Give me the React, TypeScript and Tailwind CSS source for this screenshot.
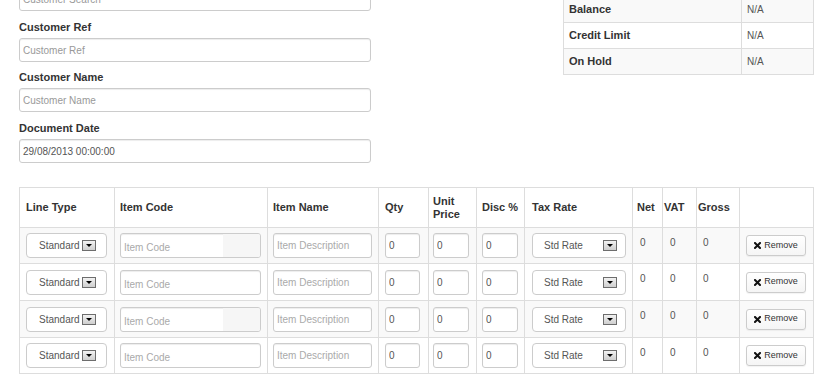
import React from "react";

const inputBase =
  "block h-[24px] w-full rounded-[3px] border border-[#ccc] bg-white pl-[3px] text-[10px] text-[#555] shadow-[inset_0_1px_1px_rgba(0,0,0,0.075)] outline-none placeholder:text-[#999]";

function FormGroup({
  label,
  placeholder,
  value,
  mb,
}: {
  label?: string;
  placeholder: string;
  value?: string;
  mb: string;
}) {
  return (
    <div className={mb}>
      {label && (
        <div className="mb-[3px] h-[15px] text-[11px] font-bold leading-[15px] text-[#333]">{label}</div>
      )}
      <input readOnly className={inputBase} placeholder={placeholder} defaultValue={value} />
    </div>
  );
}

function DropArrow() {
  return (
    <span className="flex h-[11px] w-[14px] items-center justify-center border border-[#6d6d6d] bg-gradient-to-b from-[#f2f2f2] to-[#cfcfcf]">
      <span className="block h-0 w-0 border-l-[3px] border-r-[3px] border-t-[3px] border-l-transparent border-r-transparent border-t-black" />
    </span>
  );
}

const cellInput =
  "h-[25px] rounded-[3px] border border-[#ccc] bg-white pl-[3px] text-[10px] text-[#555] shadow-[inset_0_1px_1px_rgba(0,0,0,0.075)] outline-none placeholder:text-[#aaa]";

function BodyRow({ h, striped, shaded }: { h: string; striped: boolean; shaded: boolean }) {
  const bg = striped ? "bg-[#f9f9f9]" : "bg-white";
  return (
    <div className={`flex border-b border-[#ddd] ${h} ${bg}`}>
      <div className="flex w-[95px] items-center border-r border-[#ddd] pl-[6px]">
        <div className="flex h-[25px] w-[81px] items-center rounded-[4px] border border-[#ccc] bg-white pl-[12px] text-[10px] text-[#555]">
          <span>Standard</span>
          <span className="ml-[2px]">
            <DropArrow />
          </span>
        </div>
      </div>
      <div className="flex w-[153px] items-center border-r border-[#ddd] pl-[5px]">
        <div className="relative h-[25px] w-[141px] overflow-hidden rounded-[3px] border border-[#ccc] bg-white shadow-[inset_0_1px_1px_rgba(0,0,0,0.075)]">
          {shaded && <div className="absolute right-0 top-0 h-full w-[37px] bg-[#f6f6f6]" />}
          <input
            readOnly
            className="relative h-full w-full bg-transparent pl-[3px] text-[10px] text-[#555] outline-none placeholder:text-[#aaa]"
            placeholder="Item Code"
          />
        </div>
      </div>
      <div className="flex w-[111px] items-center border-r border-[#ddd] pl-[5px]">
        <input readOnly className={`${cellInput} w-[99px]`} placeholder="Item Description" />
      </div>
      <div className="flex w-[50px] items-center border-r border-[#ddd] pl-[6px]">
        <input readOnly className={`${cellInput} w-[35px]`} defaultValue="0" />
      </div>
      <div className="flex w-[48px] items-center border-r border-[#ddd] pl-[4px]">
        <input readOnly className={`${cellInput} w-[36px]`} defaultValue="0" />
      </div>
      <div className="flex w-[48px] items-center border-r border-[#ddd] pl-[5px]">
        <input readOnly className={`${cellInput} w-[36px]`} defaultValue="0" />
      </div>
      <div className="flex w-[108px] items-center border-r border-[#ddd] pl-[7px]">
        <div className="flex h-[25px] w-[94px] items-center justify-between rounded-[4px] border border-[#ccc] bg-white pl-[11px] pr-[8px] text-[10px] text-[#555]">
          <span>Std Rate</span>
          <DropArrow />
        </div>
      </div>
      <div className="w-[30px] border-r border-[#ddd] pl-[7px] pt-[8px] text-[10px] leading-[14px] text-[#555]">0</div>
      <div className="w-[34px] border-r border-[#ddd] pl-[7px] pt-[8px] text-[10px] leading-[14px] text-[#555]">0</div>
      <div className="w-[43px] border-r border-[#ddd] pl-[6px] pt-[8px] text-[10px] leading-[14px] text-[#555]">0</div>
      <div className="flex w-[74px] items-center border-r border-[#ddd] pl-[6px]">
        <button className="flex h-[21px] w-[60px] items-center justify-center gap-[3px] rounded-[3px] border border-[#ccc] bg-gradient-to-b from-white to-[#f5f5f5] text-[9px] text-[#333] shadow-[0_1px_1px_rgba(0,0,0,0.05)]">
          <svg width="7" height="7" viewBox="0 0 7 7">
            <path d="M1 1L6 6M6 1L1 6" stroke="#111" strokeWidth="2" strokeLinecap="square" />
          </svg>
          <span>Remove</span>
        </button>
      </div>
    </div>
  );
}

export default function App() {
  const rows: { h: string; striped: boolean; shaded: boolean }[] = [
    { h: "h-[36px]", striped: true, shaded: true },
    { h: "h-[37px]", striped: false, shaded: false },
    { h: "h-[37px]", striped: true, shaded: true },
    { h: "h-[36px]", striped: false, shaded: false },
  ];
  return (
    <div className="h-[375px] w-[830px] overflow-hidden bg-white font-['Liberation_Sans',Arial,sans-serif]">
      <div className="-mt-[13px] ml-[19px] w-[795px]">
        <div className="flex items-start justify-between">
          <div className="w-[352px]">
            <FormGroup placeholder="Customer Search" mb="mb-[9px]" />
            <FormGroup label="Customer Ref" placeholder="Customer Ref" mb="mb-[8px]" />
            <FormGroup label="Customer Name" placeholder="Customer Name" mb="mb-[9px]" />
            <FormGroup label="Document Date" placeholder="" value="29/08/2013 00:00:00" mb="mb-0" />
          </div>
          <div className="mt-[9px] w-[251px] border-l border-r border-t border-[#ddd] text-[11px]">
            {[
              { k: "Balance", bg: "bg-[#f9f9f9]" },
              { k: "Credit Limit", bg: "bg-white" },
              { k: "On Hold", bg: "bg-[#f9f9f9]" },
            ].map((r) => (
              <div key={r.k} className={`flex h-[26px] border-b border-[#ddd] ${r.bg}`}>
                <div className="flex w-[178px] items-center border-r border-[#ddd] pl-[5px] font-bold text-[#333]">
                  {r.k}
                </div>
                <div className="flex flex-1 items-center pl-[5px] text-[10px] text-[#555]">N/A</div>
              </div>
            ))}
          </div>
        </div>

        <div className="mt-[24px] w-[795px] border-l border-t border-[#ddd]">
          <div className="flex h-[40px] border-b border-[#ddd] text-[11px] font-bold leading-[13px] text-[#333]">
            <div className="flex w-[95px] items-center border-r border-[#ddd] pl-[6px]">Line Type</div>
            <div className="flex w-[153px] items-center border-r border-[#ddd] pl-[5px]">Item Code</div>
            <div className="flex w-[111px] items-center border-r border-[#ddd] pl-[5px]">Item Name</div>
            <div className="flex w-[50px] items-center border-r border-[#ddd] pl-[6px]">Qty</div>
            <div className="flex w-[48px] items-center border-r border-[#ddd] pl-[4px]">
              Unit
              <br />
              Price
            </div>
            <div className="flex w-[48px] items-center whitespace-nowrap border-r border-[#ddd] pl-[5px]">Disc %</div>
            <div className="flex w-[108px] items-center border-r border-[#ddd] pl-[7px]">Tax Rate</div>
            <div className="flex w-[30px] items-center border-r border-[#ddd] pl-[4px]">Net</div>
            <div className="flex w-[34px] items-center border-r border-[#ddd] pl-[1px]">VAT</div>
            <div className="flex w-[43px] items-center border-r border-[#ddd] pl-[1px]">Gross</div>
            <div className="w-[74px] border-r border-[#ddd]" />
          </div>
          {rows.map((r, i) => (
            <BodyRow key={i} h={r.h} striped={r.striped} shaded={r.shaded} />
          ))}
        </div>
      </div>
    </div>
  );
}
